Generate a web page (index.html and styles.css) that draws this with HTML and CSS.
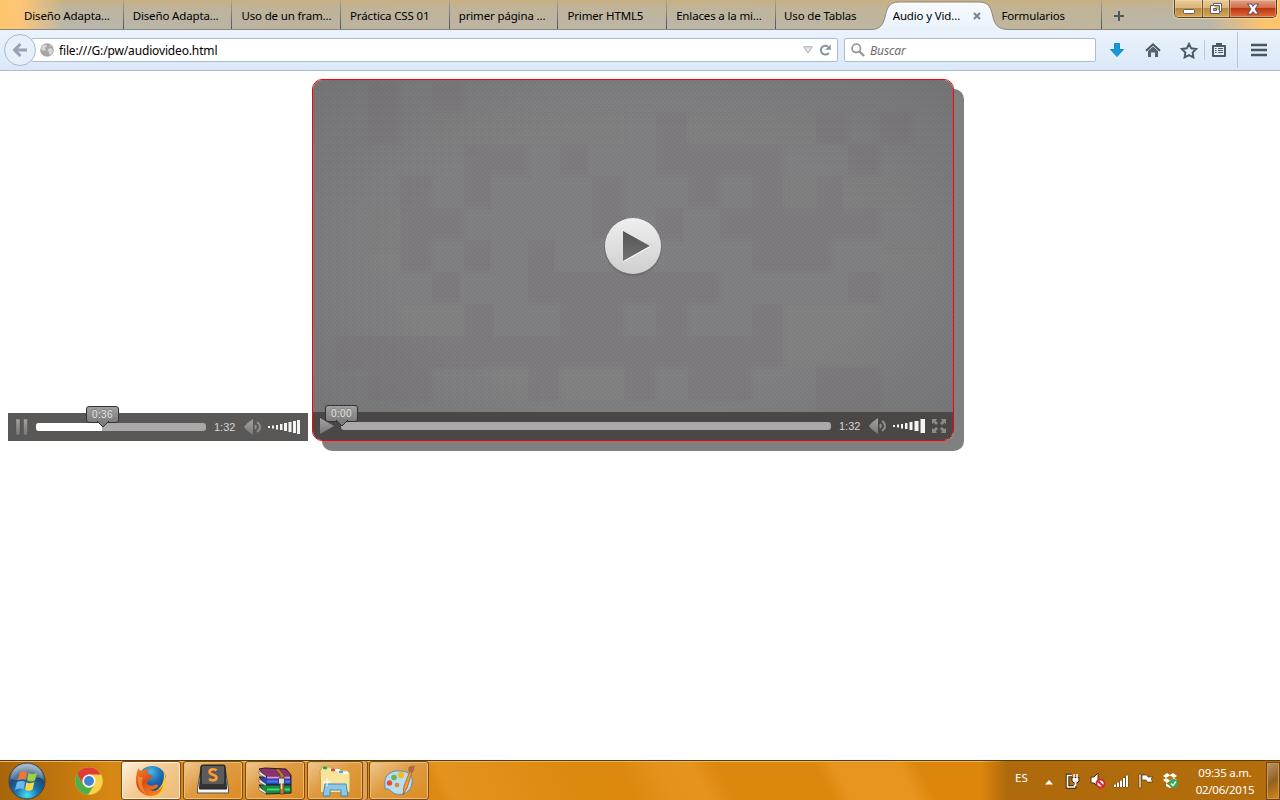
FILE: index.html
```html
<!DOCTYPE html>
<html lang="es">
<head>
<meta charset="utf-8">
<title>Audio y Video</title>
<link rel="stylesheet" href="styles.css">
</head>
<body>
<header class="tabbar">
  <div class="tab"><span>Diseño Adapta...</span></div>
  <div class="tab"><span>Diseño Adapta...</span></div>
  <div class="tab"><span>Uso de un fram...</span></div>
  <div class="tab"><span>Práctica CSS 01</span></div>
  <div class="tab"><span>primer página ...</span></div>
  <div class="tab"><span>Primer HTML5</span></div>
  <div class="tab"><span>Enlaces a la mi...</span></div>
  <div class="tab plain"><span>Uso de Tablas</span></div>
  <div class="tab active">
    <svg class="tab-shape" width="138" height="30" viewBox="0 0 138 30"><defs><linearGradient id="tg" x2="0" y2="1"><stop stop-color="#f8fbfe"/><stop offset="1" stop-color="#e9f2fb"/></linearGradient></defs><path d="M0 30V29.500C9 29.500 12 25 14 17 16 8 18 2 28 2H108C118 2 120 8 122 17 124 25 127 29.500 138 29.500V30Z" fill="url(#tg)"/><path d="M0 29.500C9 29.500 12 25 14 17 16 8 18 2 28 2H108C118 2 120 8 122 17 124 25 127 29.500 138 29.500" fill="none" stroke="#8c857b"/></svg>
    <span>Audio y Vid...</span>
    <svg class="tab-close" width="8" height="8" viewBox="0 0 8 8"><path d="M1 1L7 7M7 1L1 7" stroke="#7d8791" stroke-width="2.200"/></svg>
  </div>
  <div class="tab"><span>Formularios</span></div>
  <svg class="new-tab" width="12" height="12" viewBox="0 0 12 12"><path d="M6 1V11M1 6H11" stroke="#4b5a67" stroke-width="2"/></svg>
  <div class="window-buttons">
    <div class="wb"><svg width="14" height="8" viewBox="0 0 14 8"><rect x="1.500" y="2.500" width="11" height="4" rx="1" fill="#fff" stroke="#5c5e6c"/></svg></div>
    <div class="wb"><svg width="14" height="13" viewBox="0 0 14 13"><path d="M4.500 1.500H12.500V9.500H10.500V11.500H1.500V3.500H4.500Z" fill="#fff" stroke="#5c5e6c"/><path d="M4.500 3.500H10.500V9.500M4.500 6.500H7.500V8.500H4.500Z" fill="#d9ad69" stroke="#5c5e6c"/></svg></div>
    <div class="wb close"><svg width="14" height="12" viewBox="0 0 14 12"><path d="M2.500 1.500H5L7 4 9 1.500H11.500L8.600 6 11.500 10.500H9L7 8 5 10.500H2.500L5.400 6Z" fill="#fff" stroke="#64555f" stroke-width="1.800" paint-order="stroke"/></svg></div>
  </div>
</header>

<nav class="navbar">
  <div class="back"><svg width="16" height="16" viewBox="0 0 16 16"><path d="M8.500 2L2.500 8L8.500 14M3 8H15" fill="none" stroke="#97a3b0" stroke-width="3"/></svg></div>
  <div class="url">
    <svg width="14" height="14" viewBox="0 0 14 14"><circle cx="7" cy="7" r="6.800" fill="#a6a6a6"/><path d="M2 3L5 1.500 7.500 3 5 5 6 7 4 8 1 6.500ZM8 6L11 5 13 7.500 12 11 9.500 12 9 9 7.500 8ZM9 2L11.500 3 10 4Z" fill="#d6d6d6"/></svg>
    <span class="address">file:///G:/pw/audiovideo.html</span>
    <svg width="10" height="8" viewBox="0 0 10 8"><path d="M.8.8H9.200L5 7Z" fill="#dfe5ec" stroke="#a5adb6"/></svg>
    <svg class="reload" width="12" height="12" viewBox="0 0 12 12"><path d="M9.800 8.800A4.400 4.400 0 1 1 9 2.700" fill="none" stroke="#8795a3" stroke-width="2"/><path d="M11.800.3V5.800H6.200Z" fill="#8795a3"/></svg>
  </div>
  <div class="search">
    <svg width="14" height="14" viewBox="0 0 14 14"><circle cx="5.300" cy="5.300" r="4.200" fill="none" stroke="#999" stroke-width="1.800"/><path d="M8.500 8.500L13 13" stroke="#999" stroke-width="2.400"/></svg>
    <span>Buscar</span>
  </div>
  <div class="tools">
    <svg class="t-down" width="16" height="16" viewBox="0 0 16 16"><path d="M5.500 1.500H10.500V7.500H14.500L8 14.500 1.500 7.500H5.500Z" fill="#1996d8" stroke="#1688c7"/></svg>
    <svg class="t-home" width="16" height="16" viewBox="0 0 16 16"><path d="M8 4.500L13 9V15H10V10.500H6V15H3V9Z" fill="#566470"/><path d="M1 8.800L8 2.200 15 8.800" fill="none" stroke="#485662" stroke-width="1.900"/></svg>
    <svg class="t-star" width="18" height="17" viewBox="0 0 18 17"><path d="M9 1.800L11.200 6.300 16.200 7 12.600 10.500 13.400 15.400 9 13.100 4.600 15.400 5.400 10.500 1.800 7 6.800 6.300Z" fill="none" stroke="#4c5966" stroke-width="1.900"/></svg>
    <i class="split"></i>
    <svg class="t-list" width="16" height="16" viewBox="0 0 16 16"><path d="M2 4H14V14H2Z" fill="none" stroke="#4c5966" stroke-width="2" stroke-linejoin="round"/><path d="M5 4V1H11V4Z" fill="#4c5966"/><path d="M4 6.500H5.500M7 6.500H12M4 8.500H5.500M7 8.500H12M4 10.500H5.500M7 10.500H12" stroke="#4c5966"/></svg>
    <i class="split tall"></i>
    <svg class="t-menu" width="16" height="14" viewBox="0 0 16 14"><path d="M0 2H16M0 7H16M0 12H16" stroke="#495663" stroke-width="2.600"/></svg>
  </div>
</nav>

<main class="page">
  <div class="player audio">
    <svg class="toggle" width="14" height="18" viewBox="0 0 14 18"><defs><linearGradient id="ig" x2="0" y2="1"><stop stop-color="#a3a3a3"/><stop offset="1" stop-color="#777"/></linearGradient></defs><path d="M1 1H5V17H1ZM8.500 1H12.500V17H8.500Z" fill="url(#ig)" stroke="#4d4c4b" stroke-width=".4"/></svg>
    <div class="track"><div class="progress"></div><div class="thumb">0:36<svg width="16" height="8" viewBox="0 0 16 8"><path d="M2 0L8 6 14 0" fill="#7d7d7d" stroke="#333"/></svg></div></div>
    <span class="time">1:32</span>
    <svg class="speaker" width="18" height="18" viewBox="0 0 18 18"><path d="M0 9L3 5.500 9 1V17L3 12.500Z" fill="url(#ig)"/><path d="M11 7.200Q12.500 9 11 10.800M13 4.200C17 6.500 17 11.500 13 13.800" fill="none" stroke="#8d8d8d" stroke-width="2"/></svg>
    <svg class="volume" width="33" height="16" viewBox="0 0 33 16"><path d="M0 7H2V9H0ZM4 6.500H6V9.500H4ZM8 6H10V10.500H8ZM12 5H14.500V11H12ZM16 4H19V12H16ZM20.500 3H23.500V13H20.500ZM25 2H28V14H25ZM29 1H32V15H29Z" fill="#f4f4f4"/></svg>
  </div>
  <div class="video">
    <svg class="frame" width="640" height="360" viewBox="313 80 640 360">
      <defs>
        <pattern id="dots" width="4" height="4" patternUnits="userSpaceOnUse"><path d="M0 0h1v1h-1zM2 2h1v1h-1z" fill="#000" opacity=".1"/></pattern>
        <radialGradient id="shade" cx=".5" cy=".5" r=".68"><stop offset=".55" stop-color="#6a696a" stop-opacity="0"/><stop offset="1" stop-color="#686768" stop-opacity=".45"/></radialGradient>
        <linearGradient id="disc" x2="0" y2="1"><stop stop-color="#efefef"/><stop offset="1" stop-color="#cfcfd0"/></linearGradient>
        <linearGradient id="tri" x2="0" y2="1"><stop stop-color="#555"/><stop offset="1" stop-color="#727272"/></linearGradient>
        <filter id="soft" color-interpolation-filters="sRGB"><feGaussianBlur stdDeviation="1.200"/></filter>
      </defs>
      <rect x="313" y="80" width="640" height="360" fill="#818183"/>
      <path filter="url(#soft)" d="M368 80h32v64h-32zM432 80h32v32h-32zM656 112h32v32h-32zM816 112h32v32h-32zM880 112h32v32h-32zM464 144h64v32h-64zM560 144h28v32h-28zM656 144h128v32h-128zM848 144h32v32h-32zM400 176h32v32h-32zM464 176h26v32h-26zM592 176h32v32h-32zM688 176h32v32h-32zM752 176h32v32h-32zM816 176h26v32h-26zM400 208h64v32h-64zM592 208h32v32h-32zM656 208h26v32h-26zM720 208h160v32h-160zM400 240h32v32h-32zM464 240h26v32h-26zM528 240h26v32h-26zM752 240h80v32h-80zM432 272h28v32h-28zM528 272h192v32h-192zM848 272h32v32h-32zM464 304h30v32h-30zM560 304h64v32h-64zM656 304h32v32h-32zM752 304h32v32h-32zM336 336h448v32h-448zM368 368h64v32h-64zM528 368h32v32h-32zM624 368h32v32h-32zM688 368h64v32h-64zM816 368h64v44h-64z" fill="#7e7a7d" opacity=".65"/>
      <path filter="url(#soft)" d="M432 112h192v32h-192zM688 112h128v32h-128zM368 208h32v64h-32zM784 176h32v32h-32zM848 176h64v32h-64zM880 240h60v32h-60zM400 304h64v32h-64zM784 304h96v60h-96zM496 368h32v32h-32zM560 368h64v32h-64z" fill="#838383" opacity=".6"/>
      <rect x="313" y="80" width="640" height="360" fill="url(#shade)"/>
      <rect x="313" y="80" width="640" height="360" fill="url(#dots)"/>
      <circle cx="633" cy="247.500" r="29" fill="#555" opacity=".3"/><circle cx="633" cy="246" r="28" fill="url(#disc)"/>
      <path d="M623 231L650 246 623 261Z" fill="url(#tri)"/><path d="M623.500 261.500L650 246.500" stroke="#fff"/>
    </svg>
    <div class="player overlay">
      <svg class="toggle" width="16" height="18" viewBox="0 0 16 18"><path d="M1 1L15 9 1 17Z" fill="url(#ig)"/></svg>
      <div class="track"><div class="thumb">0:00<svg width="16" height="8" viewBox="0 0 16 8"><path d="M2 0L8 6 14 0" fill="#7d7d7d" stroke="#333"/></svg></div></div>
      <span class="time">1:32</span>
      <svg class="speaker" width="18" height="18" viewBox="0 0 18 18"><path d="M0 9L3 5.500 9 1V17L3 12.500Z" fill="url(#ig)"/><path d="M11 7.200Q12.500 9 11 10.800M13 4.200C17 6.500 17 11.500 13 13.800" fill="none" stroke="#8d8d8d" stroke-width="2"/></svg>
      <svg class="volume" width="33" height="16" viewBox="0 0 33 16"><path d="M0 7H2V9H0ZM4 6.500H6V9.500H4ZM8 6H10V10.500H8ZM12 5H14.500V11H12ZM16.500 4H19.500V12H16.500ZM21.500 3H25.500V13H21.500ZM27.500 1H32V15H27.500Z" fill="#f4f4f4"/></svg>
      <svg class="full" width="14" height="14" viewBox="0 0 14 14"><path d="M0 0H5L3.700 1.700 6 4 4 6 1.700 3.700 0 5ZM14 0V5L12.300 3.700 10 6 8 4 10.300 1.700 9 0ZM0 14V9L1.700 10.300 4 8 6 10 3.700 12.300 5 14ZM14 14H9L10.300 12.300 8 10 10 8 12.300 10.300 14 9Z" fill="#8b8a89"/></svg>
    </div>
  </div>
</main>

<footer class="taskbar">
  <svg class="orb" width="38" height="38" viewBox="0 0 38 38"><defs><radialGradient id="og" cx=".5" cy=".9" r=".9"><stop stop-color="#48e0f2"/><stop offset=".35" stop-color="#1a73a9"/><stop offset=".65" stop-color="#1c4974"/><stop offset="1" stop-color="#b4c4d2"/></radialGradient></defs><circle cx="19" cy="19" r="18" fill="url(#og)" stroke="#36424c"/><path d="M3 17C4 6 11 3 19 3S34 6 35 17C25 12 13 21 3 17Z" fill="#fff" opacity=".22"/><path d="M12 10.500C15 8.500 17 9 19 10.500L17.500 18C15 16.500 13 17 9.500 18.500Z" fill="#f47634"/><path d="M20.500 11C23 12.500 25 12.500 29 11L27 18.500C24 20 21.500 19.500 19 18.200Z" fill="#9fd143"/><path d="M9 20C12.500 18.500 15 18.500 17 20L15.500 27.500C13 26 11 26.500 7 28Z" fill="#6eb8ee"/><path d="M18.500 20.200C21 21.500 23 21.500 26.500 20L24.500 27.500C22 29.500 19 29 17 27.800Z" fill="#fcd545"/></svg>
  <svg class="chrome" width="28" height="28" viewBox="0 0 28 28"><circle cx="14" cy="14" r="13.800" fill="#fbd24b"/><path d="M2 7A13.800 13.800 0 0 1 26 7.500H14A7 7 0 0 0 7.800 17Z" fill="#de3d32"/><path d="M2 7A13.800 13.800 0 0 0 13 27.700L19 18.500A7 7 0 0 1 8 17.500Z" fill="#4fae49"/><circle cx="14" cy="14" r="6.400" fill="#fff"/><circle cx="14" cy="14" r="5" fill="#4284cf"/></svg>
  <div class="task current"><svg width="32" height="32" viewBox="0 0 32 32"><defs><radialGradient id="globe" cx=".45" cy=".2" r=".8"><stop stop-color="#49b9ea"/><stop offset=".5" stop-color="#1a6bb5"/><stop offset="1" stop-color="#123a7c"/></radialGradient><linearGradient id="fox" x2=".6" y2="1"><stop stop-color="#f08a24"/><stop offset=".5" stop-color="#dc4a1c"/><stop offset="1" stop-color="#f0801f"/></linearGradient></defs><circle cx="17" cy="15" r="14" fill="url(#globe)"/><path d="M28.500 7C33 14 32 24 26 28 21 32 14 32 9 30L20 26C27 23 30 15 28.500 7Z" fill="#f7cb40"/><path d="M3.500 3C4.500 5.500 6 6 8 5.500 10 4 12 4 14 4.500 12.500 6 12 7.500 12.500 9 15 10 17 10 18 11 18 13 14 13.500 13.500 15 13 17 12 17 11.500 18 13 21 17 21 20 20 22 19 24 20 23 21.500 20 24.500 17 25 15 24.500 19 27.500 25 25 28 20 27 27 22 31 16 31 7 31 1 24 1 16 1 10.500 2 6 3.500 3Z" fill="url(#fox)"/><path d="M3 11C2 18 4 25 11 29 7 23 6 17 8 12 6 12 4.500 12 3 11Z" fill="#f4a12f" opacity=".65"/></svg></div>
  <div class="task"><svg class="editor" width="32" height="30" viewBox="0 0 32 30"><path d="M4 3H28L31.500 25V29H.5V25Z" fill="#f4f4f4" stroke="#555"/><path d="M4 2Q4 1 6 1H26Q28 1 28 2L29.500 25H2.500Z" fill="#333" stroke="#222"/><path d="M5 2H27V19Q27 20 25 20H7Q5 20 5 19Z" fill="#5b5b5b"/><path d="M19.500 6.500C17.500 4.500 12.500 5 12.500 8 12.500 11.500 19.500 10 19.500 13.500 19.500 17 14.500 17 12 15" fill="none" stroke="#ff9d35" stroke-width="2.600"/></svg></div>
  <div class="task"><svg width="34" height="28" viewBox="0 0 34 28"><g stroke="#271d22"><path d="M1 2L7 1 28 2 33 8V10H8Z" fill="#8b316f"/><path d="M1 10L8 10H33V18H8Z" fill="#2447b1"/><path d="M1 18L8 18H33V26L8 27Z" fill="#158b44"/></g><path d="M1 4L8 9V11L1 7ZM1 12L8 17V19L1 15ZM1 20L8 25V27L1 23Z" fill="#eee" stroke="#444" stroke-width=".5"/><path d="M9 10.500H32" stroke="#ef8bd4" stroke-width="2"/><path d="M9 14.500H32" stroke="#4e79ee" stroke-width="2"/><path d="M9 22.500H32" stroke="#45d76a" stroke-width="2"/><path d="M17 2L22 8V27H26V8L21 2Z" fill="#ba7a2a" stroke="#4d321d" stroke-width=".7"/><rect x="20.500" y="11" width="6" height="6" rx="1" fill="#ddd" stroke="#444"/><path d="M23.500 13V22" stroke="#ddd" stroke-width="1.500"/></svg></div>
  <div class="task explorer"><svg width="34" height="32" viewBox="0 0 34 32"><path d="M2 6L4 2H13L15 5H29L32 8V27H3Z" fill="#f7e49a" stroke="#c49a47"/><path d="M12 5H21L22 8H30" fill="none" stroke="#fff" stroke-width="2"/><path d="M5 3H9" stroke="#20a94d" stroke-width="2.500"/><path d="M13 5H17" stroke="#da4935" stroke-width="2.500"/><path d="M21 7H25" stroke="#4fa5dc" stroke-width="2.500"/><path d="M3 10H31V27H3Z" fill="#f8e49b"/><path d="M5 31L7 19H28L30 31H23V25H12V31Z" fill="#8bc8e8" stroke="#4c88af"/><path d="M9 13V21M5 17H13" stroke="#fff"/></svg></div>
  <div class="task paint"><svg width="34" height="32" viewBox="0 0 34 32"><path d="M3 20C1 10 10 5 18 6 28 6 31 12 30 18 29 27 21 31 14 29 9 28 9 23 3 24Z" fill="#b9dcee" stroke="#688da9"/><circle cx="7.500" cy="18" r="2.700" fill="#df4c48"/><circle cx="12" cy="12.500" r="2.800" fill="#61b94b"/><circle cx="19" cy="10" r="3.200" fill="#f4bc2b"/><circle cx="15" cy="20" r="2.300" fill="#d88b24"/><path d="M21 30L22 21 28 6 30 7 25 23Z" fill="#ef9c3c" stroke="#b15a20" stroke-width=".8"/><path d="M27 7C24 1 30 0 33 1 31 4 33 6 30 8Z" fill="#a76c46"/></svg></div>
  <div class="tray">
    <span class="lang">ES</span>
    <svg class="up" width="8" height="5" viewBox="0 0 8 5"><path d="M0 4.500L4 0 8 4.500Z" fill="#fff"/></svg>
    <svg class="power" width="16" height="16" viewBox="0 0 16 16"><path d="M7 2.500H2.500V14H9.500V12" fill="none" stroke="#33240f" stroke-width="3.600"/><path d="M7 2.500H2.500V14H9.500V12" fill="none" stroke="#fff" stroke-width="1.600"/><path d="M7 4.500H14V8L12 10H9L7 8Z" fill="#fff" stroke="#33240f"/><path d="M9 1V5M12 1V5M10.500 9V13" stroke="#fff" stroke-width="1.500"/></svg>
    <svg class="mute" width="17" height="17" viewBox="0 0 17 17"><path d="M2 5H5L9 1V15L5 11H2Z" fill="#fff" stroke="#4a320e"/><circle cx="11.500" cy="11.500" r="4" fill="#fff" stroke="#d9262b" stroke-width="2"/><path d="M9 9L14 14" stroke="#d9262b" stroke-width="2"/></svg>
    <svg class="signal" width="17" height="14" viewBox="0 0 17 14"><path d="M1 10.500H3V13H1ZM4 8.500H6V13H4ZM7 6.500H9V13H7ZM10 4H12V13H10ZM13 1.500H15V13H13Z" fill="#fff" stroke="#584016" stroke-width=".9" paint-order="stroke"/></svg>
    <svg class="flag" width="16" height="16" viewBox="0 0 16 16"><path d="M1 1H3V15H1ZM4 2H9L10 4H15L13 6 15 9H9L8 7H4Z" fill="#fff" stroke="#51380e" stroke-width=".7"/></svg>
    <svg class="drop" width="17" height="17" viewBox="0 0 17 17"><path d="M5 1L8 3 11 1 15 4 12 6 15 8 11 11 8 9 5 11 1 8 4 6 1 4ZM4 11L8 14 12 11V14L8 16 4 14Z" fill="#fff"/><path d="M8 3.500L12 6 8 8.500 4 6Z" fill="#b37415"/><circle cx="11.500" cy="11.500" r="4.500" fill="#35a854"/><path d="M9 11.500L11 13.500 14 9.500" fill="none" stroke="#fff" stroke-width="1.400"/></svg>
    <div class="clock"><span>09:35 a.m.</span><span>02/06/2015</span></div>
    <div class="desktop"></div>
  </div>
</footer>
</body>
</html>
```
FILE: styles.css
```css
* { box-sizing: border-box; }
body { margin: 0; width: 1280px; height: 800px; display: flex; flex-direction: column; overflow: hidden; background: #fff; font-family: "Noto Sans", "Open Sans", sans-serif; font-size: 12px; color: #000; }
svg { display: block; flex: none; }

.tabbar { height: 30px; flex: none; display: flex; position: relative; padding-left: 15px; border-bottom: 1px solid #8c857b; background: linear-gradient(90deg, #ffc56e 0, #fdc576 20px, rgba(255,197,110,0) 65px, rgba(255,195,107,0) 1210px, #ffc36b 1265px), linear-gradient(#c8b183 0, rgba(195,177,140,.5) 8px, transparent 100%), linear-gradient(90deg, #b8b7af 80px, #bcb3a0 300px, #bcb7a9 700px, #c0b59c 1060px, #b9b8ae 1180px); }
.tab { width: 108.700px; flex: none; padding: 8px 0 0 9px; position: relative; line-height: 16px; font-size: 11.500px; letter-spacing: -.15px; white-space: nowrap; border-right: 1px solid transparent; border-image: linear-gradient(rgba(69,76,84,.1), #45515c) 1; border-width: 0 1px 0 0; }
.tab.plain, .tab.active { border-image: none; border-color: transparent; }
.tab.active { display: flex; justify-content: space-between; padding-right: 11px; }
.tab:nth-child(n+8) span { left: -.8px; }
.tab span, .tab-close { position: relative; z-index: 1; }
.tab-close { margin-top: 4px; }
.tab-shape { position: absolute; left: -14px; top: 0; z-index: 1; }
.new-tab { margin: 10px 0 0 11px; }
.window-buttons { display: flex; position: absolute; right: 3px; top: 0; height: 18px; border: 1px solid #51422f; border-top: 0; border-radius: 0 0 5px 5px; overflow: hidden; box-shadow: 0 0 0 1px rgba(255,226,178,.6); }
.wb { width: 27px; display: flex; align-items: center; justify-content: center; background: linear-gradient(#e9cd9d, #dbb678 45%, #b98a3f 50%, #d4a655); border-right: 1px solid #6a543a; box-shadow: inset 0 0 0 1px rgba(255,230,190,.35); }
.wb:first-child { width: 28px; padding-top: 4px; }
.wb.close { width: 46px; border: 0; background: linear-gradient(#e2a38a, #d06b4b 45%, #bd3512 50%, #e36b38); }

.navbar { height: 41px; flex: none; display: flex; align-items: center; border-bottom: 1px solid #a9bdd5; background: linear-gradient(#ebf3fb, #dae8f8); padding-left: 4px; }
.back { width: 32px; height: 32px; border: 1px solid #a5bad0; border-radius: 50%; background: #e6effa; display: flex; align-items: center; justify-content: center; z-index: 1; }
.url, .search { height: 24px; border: 1px solid #a9bdd5; background: #fff; border-radius: 2px; display: flex; align-items: center; }
.url { width: 807px; margin-left: -5px; padding: 0 6px 0 8px; }
.address { flex: 1; margin-left: 5px; letter-spacing: -.15px; padding-top: 1px; }
.reload { margin-left: 6px; }
.search { width: 252px; margin-left: 6px; padding-left: 6px; gap: 5px; font-style: italic; color: #6d6d6d; font-size: 12px; letter-spacing: -.1px; }
.search span { padding-top: 1px; }
.tools { flex: 1; height: 40px; display: flex; align-items: center; }
.t-down { margin-left: 13px; }
.t-home { margin-left: 20px; }
.t-star { margin-left: 19px; }
.split { width: 1px; height: 20px; background: #bccbdc; margin-left: 6px; }
.t-list { margin-left: 6px; }
.split.tall { height: 36px; margin-left: 10px; background: #b6c6d8; }
.t-menu { margin-left: 13px; }

.page { flex: 1; min-height: 0; display: flex; align-items: flex-start; gap: 4px; padding: 8px; }
.player { display: flex; align-items: center; height: 28px; color: #d6d6d6; font: 11px "Liberation Sans", sans-serif; }
.audio { width: 300px; background: #595856; margin-top: 334px; }
.toggle { margin-left: 7px; }
.track { flex: 1; height: 8px; border-radius: 3px; background: #aaa8a9; margin-left: 7px; position: relative; }
.progress { width: 66px; height: 8px; border-radius: 3px 0 0 3px; background: #fff; }
.thumb { position: absolute; left: 50px; top: -17px; width: 33px; height: 17px; border: 1px solid #333; border-radius: 3px; background: linear-gradient(#a0a0a0, #7d7d7d); color: #e4e4e4; font-size: 10px; line-height: 15px; text-align: center; letter-spacing: .4px; text-shadow: 0 -1px 1px #777; }
.thumb svg { position: absolute; left: 8px; top: 14px; }
.time { width: 22px; margin-left: 8px; }
.speaker { margin-left: 8px; margin-right: -1px; }
.volume { margin: 0 7px 0 7px; }
.video { width: 642px; height: 362px; border: 1px solid #f00; border-radius: 10px; box-shadow: 10px 10px 0 #808080; position: relative; }
.frame { border-radius: 9px; }
.overlay { position: absolute; left: 0; right: 0; bottom: 0; background: #4a4746; border-radius: 0 0 9px 9px; }
.overlay .toggle { margin-left: 6px; }
.overlay .track { margin-left: 6px; }
.overlay .thumb { left: -16px; }
.overlay .volume { margin-right: 6px; }
.full { margin-right: 7px; }

.taskbar { height: 40px; flex: none; display: flex; align-items: center; border-top: 1px solid #5a3a10; box-shadow: inset 0 1px #eab568; background: linear-gradient(62deg, transparent 20%, rgba(245,169,57,.35) 20.500%, transparent 27%, transparent 34%, rgba(245,169,57,.3) 35%, transparent 45%, transparent 49%, rgba(245,169,57,.3) 52%, rgba(245,169,57,.35) 54.500%, transparent 56.500%, transparent 64%, rgba(245,169,57,.4) 65.500%, rgba(245,169,57,.4) 70.500%, transparent 72%), linear-gradient(90deg, #a96509, #bd740d 55px, #d78713 110px, #dc8a12 420px, #dc860b 980px); }
.orb { margin-left: 8px; }
.chrome { margin: 0 19px 0 29px; }
.task { width: 60px; height: 39px; flex: none; margin-right: 2px; border: 1px solid #7a4b12; border-radius: 3px; display: flex; align-items: center; justify-content: center; position: relative; box-shadow: inset 0 0 0 1px #edbb76; background: linear-gradient(145deg, #efc890, #df9b42 45%, #db8c22); }
.task.current { margin-left: -1px; background: linear-gradient(140deg, #fff0dc, #f3c990 50%, #edba77); box-shadow: inset 0 0 0 1px #fff2df; }
.editor { margin-bottom: 3px; }
.explorer { width: 56px; margin-right: 6px; box-shadow: inset 0 0 0 1px #edbb76, 4px 0 0 #e2a14e, 5px 0 0 #7a4b12; }
.tray { margin-left: auto; width: 299px; height: 39px; display: flex; align-items: center; color: #fff; background: linear-gradient(90deg, transparent, #ad690b 27px, #b46e0c); font-size: 12px; }
.lang { margin-left: 34px; width: 15px; font-size: 11.500px; letter-spacing: 0; margin-top: -6px; }
.up { margin-left: 15px; margin-top: 3px; }
.power { margin-left: 12px; }
.mute { margin-left: 8px; }
.signal { margin-left: 7px; }
.flag { margin-left: 8px; }
.drop { margin-left: 8px; }
.clock { width: 72px; margin-left: 10px; display: flex; flex-direction: column; align-items: center; line-height: 17px; font-size: 11.500px; letter-spacing: -.25px; }
.desktop { width: 14px; height: 38px; flex: none; margin-left: auto; border: 1px solid #70430b; box-shadow: inset 0 0 0 1px #ca9855; background: linear-gradient(145deg, #b99569, #936122 50%, #d98617); }
```
